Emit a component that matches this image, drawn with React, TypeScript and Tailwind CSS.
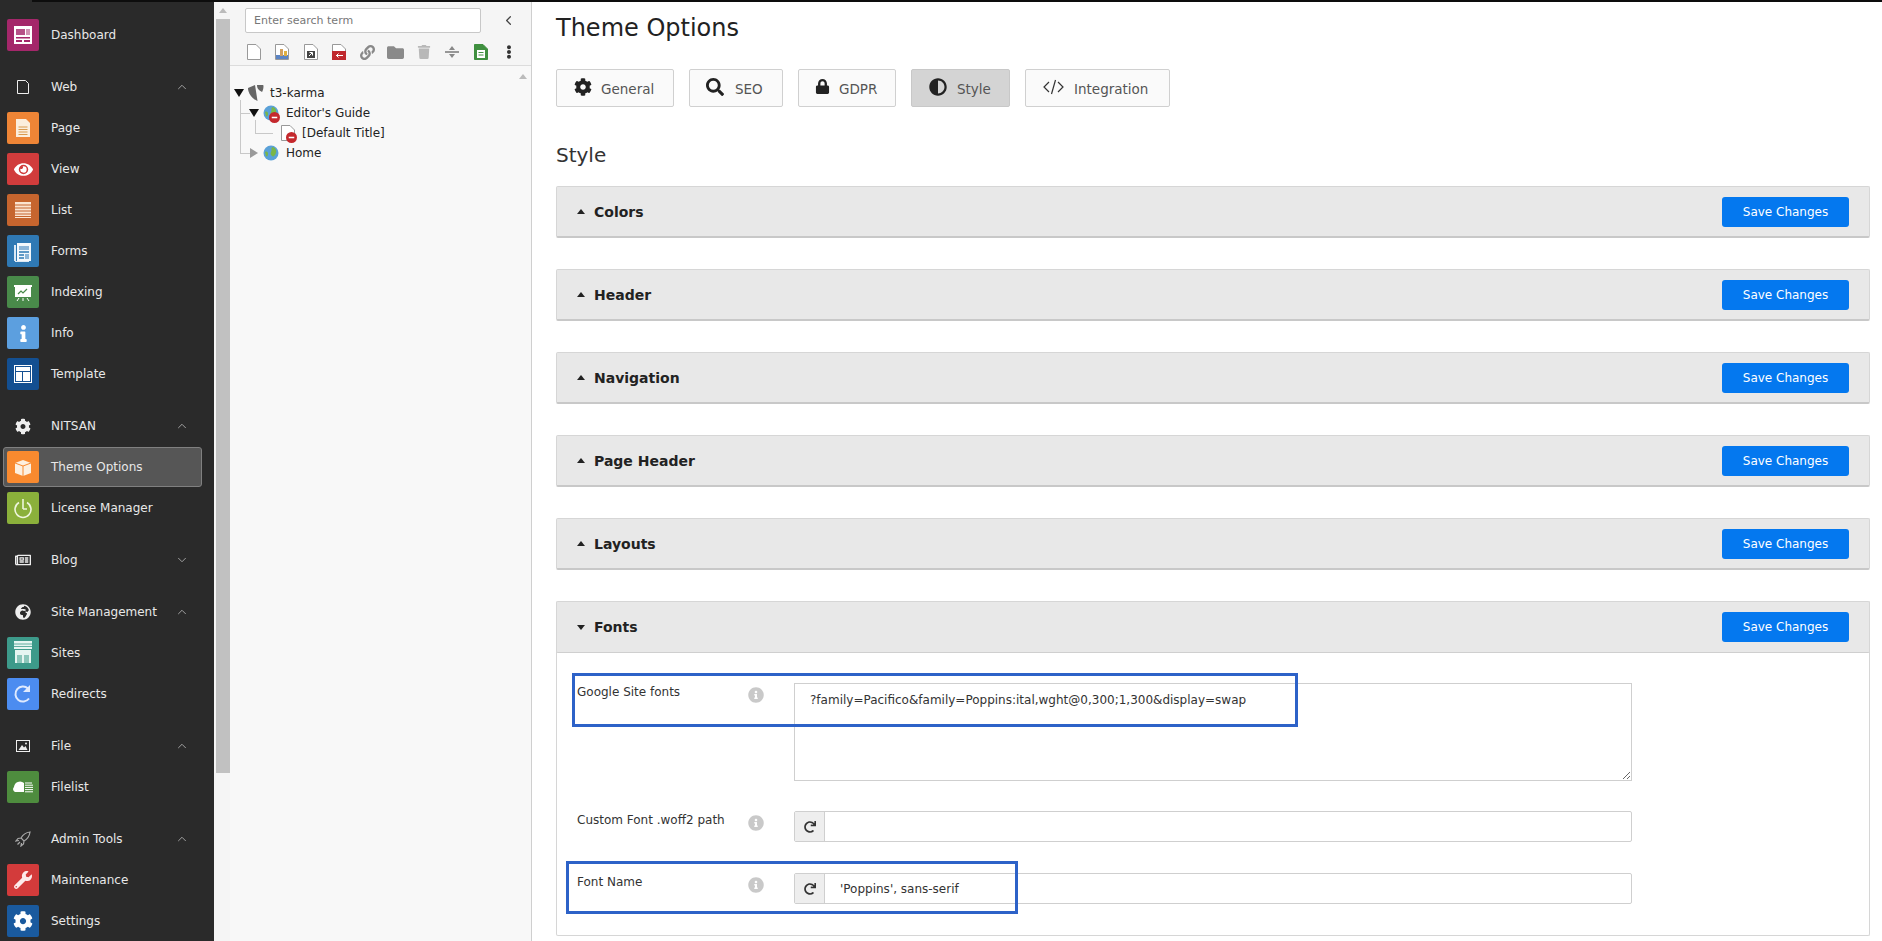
import React from "react";
import { FaCog, FaSearch, FaLock, FaAdjust, FaRedo, FaInfoCircle, FaFolder, FaTrash, FaLink, FaEllipsisV, FaWrench, FaEye, FaInfo, FaGlobeAfrica, FaRegNewspaper } from "react-icons/fa";
import { ChevronUp, ChevronDown, ChevronLeft } from "lucide-react";

const W = "#ffffff";
const ModDash = () => (
  <svg viewBox="0 0 32 32" className="w-8 h-8"><rect x="7" y="7" width="18" height="18" fill={W} /><rect x="9" y="10" width="9" height="6" fill="#a4276a" opacity=".8" /><rect x="19" y="10" width="4" height="6" fill="#a4276a" opacity=".5" /><rect x="9" y="18" width="14" height="1.5" fill="#a4276a" /><rect x="9" y="21" width="6" height="2" fill="#a4276a" /><rect x="17" y="21" width="6" height="2" fill="#a4276a" /></svg>
);
const ModPage = () => (
  <svg viewBox="0 0 32 32" className="w-8 h-8"><path d="M9 7h10l4 4v14H9z" fill="#fbeedd" /><path d="M11.500 15h9M11.500 17.500h9M11.500 20h9M11.500 22.500h9" stroke="#d99a4e" strokeWidth="1.200" /></svg>
);
const ModView = () => (
  <div className="w-8 h-8 flex items-center justify-center"><FaEye size={19} color="#fff" /></div>
);
const ModList = () => (
  <svg viewBox="0 0 32 32" className="w-8 h-8"><path d="M8 8h16v16H8z" fill="#fbe4d0" /><path d="M8 11h16M8 14h16M8 17h16M8 20h16M8 22.500h16" stroke="#c6652e" strokeWidth="1.100" /></svg>
);
const ModForms = () => (
  <svg viewBox="0 0 32 32" className="w-8 h-8"><path d="M7 10h2v16h-2zM8 26h14v1H8z" fill="#dbe9f5" /><rect x="10" y="8" width="14" height="18" fill="#f3f8fc" /><path d="M12 11h10v4H12z" fill="#8db6d8" /><path d="M12 17h10M12 20h5M12 23h5" stroke="#2f79b4" strokeWidth="1.300" /><rect x="18" y="19" width="4" height="5" fill="#8db6d8" /></svg>
);
const ModIndex = () => (
  <svg viewBox="0 0 32 32" className="w-8 h-8"><rect x="7" y="9" width="18" height="2" fill={W} /><rect x="8" y="11" width="16" height="10" fill={W} /><path d="M11 18l3-3 2 2 4-4" stroke="#498a4a" strokeWidth="1.200" fill="none" /><path d="M12 22l-2 3M20 22l2 3M16 22v3" stroke={W} strokeWidth="1" /></svg>
);
const ModInfo = () => (
  <div className="w-8 h-8 flex items-center justify-center"><FaInfo size={17} color="#fff" /></div>
);
const ModTemplate = () => (
  <svg viewBox="0 0 32 32" className="w-8 h-8"><rect x="7.500" y="7.500" width="17" height="17" fill="none" stroke={W} /><rect x="9" y="9" width="14" height="4" fill={W} /><rect x="9" y="14" width="6" height="9" fill={W} /><rect x="16" y="14" width="7" height="9" fill={W} /></svg>
);
const ModTheme = () => (
  <svg viewBox="0 0 32 32" className="w-8 h-8"><path d="M8 12l8-3 8 3v10l-8 3-8-3z" fill="#fdf0e0" /><path d="M8 12l8 3 8-3M16 15v10" stroke="#f98a2f" strokeWidth="1" fill="none" /></svg>
);
const ModLicense = () => (
  <svg viewBox="0 0 32 32" className="w-8 h-8"><path d="M12 10.500a8 8 0 1 0 8 0" fill="none" stroke="#eef5dc" strokeWidth="1.600" /><path d="M16 7v10M16 17h4" stroke="#eef5dc" strokeWidth="1.600" fill="none" /></svg>
);
const ModSites = () => (
  <svg viewBox="0 0 32 32" className="w-8 h-8"><rect x="7" y="4" width="18" height="8" fill="#e6f5f1" /><path d="M7 7h18M7 9.500h18" stroke="#3d9a8a" strokeWidth=".8" /><rect x="8" y="13" width="16" height="13" fill="#e6f5f1" /><rect x="10" y="18" width="5" height="8" fill="#8cc6ba" /><rect x="17" y="18" width="5" height="8" fill="#8cc6ba" /></svg>
);
const ModRedirect = () => (
  <svg viewBox="0 0 32 32" className="w-8 h-8"><path d="M22 20.500A7.500 7.500 0 1 1 21 10.500" fill="none" stroke="#dfeafe" strokeWidth="2" /><path d="M23 7v7h-7z" fill="#dfeafe" /></svg>
);
const ModFilelist = () => (
  <svg viewBox="0 0 32 32" className="w-8 h-8"><path d="M8 21a3 3 0 0 1-1-5 6 6 0 0 1 10-4v9z" fill={W} /><path d="M18 12h7M18 14.200h8M18 16.400h8M18 18.600h8M18 20.800h8" stroke={W} strokeWidth="1" /></svg>
);
const ModMaint = () => (
  <div className="w-8 h-8 flex items-center justify-center"><FaWrench size={18} color="#fdeaea" /></div>
);
const ModSettings = () => (
  <div className="w-8 h-8 flex items-center justify-center"><FaCog size={20} color="#fff" /></div>
);

const HWeb = () => (
  <svg viewBox="0 0 16 16" className="w-4 h-4"><path d="M2.500 1.500h8l3 3v10h-11z" fill="none" stroke="#eee" strokeWidth="1" /></svg>
);
const HFile = () => (
  <svg viewBox="0 0 16 16" className="w-4 h-4"><rect x="1.500" y="2.500" width="13" height="11" fill="none" stroke="#eee" /><path d="M3.500 12l3.500-5 2 2.500 1.500-1.500 2 4z" fill="#eee" /><circle cx="11" cy="5.500" r="1" fill="#eee" /></svg>
);
const HRocket = () => (
  <svg viewBox="0 0 16 16" className="w-4 h-4"><path d="M15 1c-4 .5-7 2.500-9 6l3 3c3.500-2 5.500-5 6-9zM6 7L3 7.500 1 10l3-.5M9 10l-.5 3L6 15l.5-3M5 11l-2.500 2.500" fill="none" stroke="#a8a8a8" strokeWidth="1.200" /></svg>
);

function Item({ label, color, icon, active }: { label: string; color: string; icon: React.ReactNode; active?: boolean }) {
  return (
    <div className="h-[41px] pl-[3px] pr-[12px]">
      <div className={`h-[40px] flex items-center pl-[3px] rounded-[3px] border ${active ? "bg-[#565656] border-[#808080]" : "border-transparent"}`}>
        <div className="w-8 h-8 rounded-[2px] shrink-0 flex items-center justify-center" style={{ backgroundColor: color }}>{icon}</div>
        <span className="ml-[12px] text-[12px] text-[#e8e8e8]">{label}</span>
      </div>
    </div>
  );
}

function Head({ label, icon, open }: { label: string; icon: React.ReactNode; open?: boolean }) {
  return (
    <div className="h-[41px] mt-[11px] pb-px flex items-center pl-[15px] pr-[25px]">
      <div className="w-4 h-4 flex items-center justify-center shrink-0">{icon}</div>
      <span className="ml-[20px] text-[12px] text-[#e8e8e8] flex-1">{label}</span>
      {open ? <ChevronUp size={14} strokeWidth={1.6} color="#a8a8a8" /> : <ChevronDown size={14} strokeWidth={1.6} color="#a8a8a8" />}
    </div>
  );
}

function Sidebar() {
  return (
    <aside className="w-[214px] shrink-0 bg-[#2a2a2a] pt-[13px] overflow-hidden">
      <Item label="Dashboard" color="#a4276a" icon={<ModDash />} />
      <Head label="Web" open icon={<HWeb />} />
      <Item label="Page" color="#ee8536" icon={<ModPage />} />
      <Item label="View" color="#d13c3c" icon={<ModView />} />
      <Item label="List" color="#c6652e" icon={<ModList />} />
      <Item label="Forms" color="#2f79b4" icon={<ModForms />} />
      <Item label="Indexing" color="#498a4a" icon={<ModIndex />} />
      <Item label="Info" color="#5c9fdf" icon={<ModInfo />} />
      <Item label="Template" color="#134f91" icon={<ModTemplate />} />
      <Head label="NITSAN" open icon={<FaCog size={17} color="#eee" />} />
      <Item label="Theme Options" color="#f98a2f" active icon={<ModTheme />} />
      <Item label="License Manager" color="#8bb03b" icon={<ModLicense />} />
      <Head label="Blog" icon={<FaRegNewspaper size={16} color="#eee" />} />
      <Head label="Site Management" open icon={<FaGlobeAfrica size={16} color="#eee" />} />
      <Item label="Sites" color="#3d9a8a" icon={<ModSites />} />
      <Item label="Redirects" color="#4c8cf0" icon={<ModRedirect />} />
      <Head label="File" open icon={<HFile />} />
      <Item label="Filelist" color="#4e8c3e" icon={<ModFilelist />} />
      <Head label="Admin Tools" open icon={<HRocket />} />
      <Item label="Maintenance" color="#d33b3b" icon={<ModMaint />} />
      <Item label="Settings" color="#1a5a9e" icon={<ModSettings />} />
    </aside>
  );
}

const Doc = ({ children, stroke = "#999" }: { children?: React.ReactNode; stroke?: string }) => (
  <svg viewBox="0 0 16 16" className="w-4 h-4"><path d="M1.500 .5H10l4.500 4.500V15.500H1.500z" fill="#fff" stroke={stroke} />{children}</svg>
);
const Sep = () => (
  <svg viewBox="0 0 16 16" className="w-4 h-4"><path d="M1 8h14" stroke="#777" strokeWidth="1.500" /><path d="M8 2l3 4H5zM8 14l-3-4h6z" fill="#888" /></svg>
);

function TreeToolbar() {
  const cells: React.ReactNode[] = [
    <Doc />,
    <Doc><rect x="2" y="11" width="12" height="4" fill="#5b84c4" /><rect x="6" y="5" width="3" height="7" fill="#d0a060" /><rect x="10" y="7" width="3" height="5" fill="#e0b040" /></Doc>,
    <Doc><path d="M4 7h8v7H4z" fill="#444" /><path d="M6 12l3-3M6.500 8.500H9.500V11.500" stroke="#fff" fill="none" /></Doc>,
    <Doc><rect x="1" y="7" width="14" height="9" fill="#c0282d" /><path d="M5 11.500h7M7.500 9.500l-2 2 2 2" stroke="#fff" fill="none" /></Doc>,
    <FaLink size={15} color="#888" />,
    <FaFolder size={17} color="#8a8a8a" />,
    <FaTrash size={14} color="#b8b8b8" />,
    <Sep />,
    <Doc stroke="#3f8f3f"><path d="M1.500 .5H10l4.500 4.500V15.500H1.500z" fill="#3f8f3f" /><rect x="4" y="6" width="8" height="8" fill="#fff" /><path d="M5.500 8.500h5M5.500 11h5" stroke="#3f8f3f" /></Doc>,
    <FaEllipsisV size={14} color="#333" />,
  ];
  return (
    <div className="h-[32px] mt-[3px] flex items-center pl-[10px]">
      {cells.map((c, i) => (
        <div key={i} className="w-[28.300px] h-4 flex items-center justify-center shrink-0">{c}</div>
      ))}
    </div>
  );
}

const Globe = () => (
  <svg viewBox="0 0 16 16" className="w-4 h-4"><circle cx="8" cy="8" r="7.500" fill="#5aa1d8" /><path d="M9 2c3 0 5 3 4 6s-3 4-4 3-2-2-1-4 0-3 1-5z" fill="#7ab648" /><path d="M2 7c2-1 3 0 3 2s-1 3-2 2z" fill="#7ab648" /></svg>
);
const Badge = () => (
  <svg viewBox="0 0 10 10" className="absolute -right-[1px] -bottom-[2px] w-[11px] h-[11px]"><circle cx="5" cy="5" r="5" fill="#c4282d" /><path d="M2.500 5h5" stroke="#fff" strokeWidth="1.400" /></svg>
);
const Tri = ({ gray }: { gray?: boolean }) =>
  gray ? (
    <svg viewBox="0 0 10 10" className="w-[10px] h-[10px]"><path d="M1 0l8 5-8 5z" fill="#9a9a9a" /></svg>
  ) : (
    <svg viewBox="0 0 10 10" className="w-[10px] h-[10px]"><path d="M0 1h10l-5 8z" fill="#111" /></svg>
  );

function TreeRow({ indent, tri, icon, label, tight }: { indent: string; tri?: React.ReactNode; icon: React.ReactNode; label: string; tight?: boolean }) {
  return (
    <div className={`h-[20px] flex items-center ${indent}`}>
      <div className="w-[10px] h-[10px] flex shrink-0 mr-[4px]">{tri}</div>
      <div className="relative w-4 h-4 shrink-0">{icon}</div>
      <span className={`${tight ? "ml-[6px]" : "ml-[7px]"} text-[12px] text-[#222] whitespace-nowrap`}>{label}</span>
    </div>
  );
}

function TreePanel() {
  return (
    <div className="w-[318px] shrink-0 flex bg-[#f5f5f5] border-r border-[#cfcfcf] h-full">
      <div className="w-[16px] shrink-0 pl-[2px] flex flex-col items-stretch">
        <div className="h-[17px] flex items-center justify-center">
          <svg viewBox="0 0 8 5" className="w-2 h-[5px]"><path d="M4 0l4 5H0z" fill="#bbb" /></svg>
        </div>
        <div className="h-[754px] bg-[#c1c1c1]" />
      </div>
      <div className="flex-1 flex flex-col min-w-0">
        <div className="h-[64px] border-b border-[#dcdcdc] shrink-0">
          <div className="flex items-center pl-[15px] pt-[6px]">
            <div className="w-[236px] h-[25px] bg-white border border-[#c8c8c8] rounded-[2px] pl-[8px] pt-px flex items-center text-[11px] text-[#777]">Enter search term</div>
            <div className="ml-[20px]"><ChevronLeft size={15} color="#444" /></div>
          </div>
          <TreeToolbar />
        </div>
        <div className="relative flex-1 bg-[#f8f8f8] pt-[17px]">
          <div className="absolute right-[4px] top-[8px]">
            <svg viewBox="0 0 8 5" className="w-2 h-[5px]"><path d="M4 0l4 5H0z" fill="#bbb" /></svg>
          </div>
          <div className="absolute left-[10px] top-[34px] w-px h-[53px] bg-[#c8c8c8]" />
          <div className="absolute left-[10px] top-[47px] w-[10px] h-px bg-[#c8c8c8]" />
          <div className="absolute left-[10px] top-[87px] w-[10px] h-px bg-[#c8c8c8]" />
          <div className="absolute left-[25px] top-[54px] w-px h-[13px] bg-[#c8c8c8]" />
          <div className="absolute left-[25px] top-[67px] w-[18px] h-px bg-[#c8c8c8]" />
          <TreeRow indent="pl-[4px]" tight tri={<Tri />} label="t3-karma" icon={
            <svg viewBox="0 0 16 16" className="w-4 h-4"><path d="M0 3l7-3 2.500 16C4 14 0 8 0 3z" fill="#666" /><path d="M9 0h6c1 0 .5 5-1 7C11 5 9 4 9 0z" fill="#666" /></svg>
          } />
          <TreeRow indent="pl-[19px]" tri={<Tri />} label="Editor's Guide" icon={<><Globe /><Badge /></>} />
          <TreeRow indent="pl-[36px]" tight label="[Default Title]" icon={<><Doc /><Badge /></>} />
          <TreeRow indent="pl-[19px]" tri={<Tri gray />} label="Home" icon={<Globe />} />
        </div>
      </div>
    </div>
  );
}

function Tab({ label, icon, active, box }: { label: string; icon: React.ReactNode; active?: boolean; box: string }) {
  return (
    <div className={`h-[38px] flex items-center rounded-[2px] border ${box} ${active ? "bg-[#d4d4d4] border-[#c8c8c8]" : "bg-[#fafafa] border-[#d0d0d0]"}`}>
      <div className="-mt-[3px] flex">{icon}</div>
      <span className="pt-[2px] text-[13.500px] text-[#555]">{label}</span>
    </div>
  );
}

function Panel({ label }: { label: string }) {
  return (
    <div className="mb-[31px]">
      <PanelHead label={label} />
    </div>
  );
}

function PanelHead({ label, open }: { label: string; open?: boolean }) {
  return (
    <div className={`h-[52px] flex items-center px-[20px] bg-[#e8e8e8] border border-[#d6d6d6] ${open ? "-mx-px border-b-[#cfcfcf]" : "border-b-2 border-b-[#c8c8c8]"} rounded-[2px]`}>
      <svg viewBox="0 0 8 5" className={`w-2 h-[5px] ${open ? "rotate-180" : ""}`}><path d="M4 0l4 5H0z" fill="#222" /></svg>
      <span className="ml-[9px] pt-px text-[14px] font-bold text-[#222] flex-1">{label}</span>
      <div className="w-[127px] h-[30px] rounded-[3px] bg-[#0478ef] flex items-center justify-center text-[12px] text-white">Save Changes</div>
    </div>
  );
}

const Field = ({ label, children }: { label: string; children: React.ReactNode }) => (
  <div className="flex">
    <div className="w-[171px] shrink-0 text-[12px] leading-[18px] text-[#333]">{label}</div>
    <div className="w-4 shrink-0 mt-[4px]"><FaInfoCircle size={16} color="#c9c9c9" /></div>
    <div className="ml-[30px] w-[838px]">{children}</div>
  </div>
);

const Group = ({ value }: { value?: string }) => (
  <div className="h-[31px] flex border border-[#cfcfcf] rounded-[2px] bg-white">
    <div className="w-[30px] bg-[#eeeeee] border-r border-[#cfcfcf] flex items-center justify-center"><FaRedo size={12} color="#333" /></div>
    <input readOnly value={value ?? ""} className="flex-1 pl-[15px] text-[12px] text-[#333] outline-none bg-transparent" />
  </div>
);

function Main() {
  return (
    <main className="flex-1 min-w-0 bg-white pl-[24px] pr-[12px] pt-[11px] overflow-hidden">
      <h1 className="text-[24px] leading-[30px] text-[#222]">Theme Options</h1>
      <div className="mt-[26px] flex gap-[15px]">
        <Tab box="w-[118px] pl-[17px] gap-[9px]" label="General" icon={<FaCog size={18} color="#222" />} />
        <Tab box="w-[94px] pl-[16px] gap-[11px]" label="SEO" icon={<FaSearch size={18} color="#222" />} />
        <Tab box="w-[98px] pl-[16px] gap-[9px]" label="GDPR" icon={<FaLock size={15} color="#222" />} />
        <Tab box="w-[99px] pl-[17px] gap-[10px]" label="Style" active icon={<FaAdjust size={18} color="#222" />} />
        <Tab box="w-[145px] pl-[17px] gap-[10px]" label="Integration" icon={
          <svg viewBox="0 0 21 16" className="w-[21px] h-4"><path d="M6 3L1 8l5 5M15 3l5 5-5 5M12.500 1L8.500 15" fill="none" stroke="#333" strokeWidth="1.200" /></svg>
        } />
      </div>
      <h2 className="mt-[34px] text-[20px] leading-[28px] text-[#333]">Style</h2>
      <div className="mt-[17px]">
        <Panel label="Colors" />
        <Panel label="Header" />
        <Panel label="Navigation" />
        <Panel label="Page Header" />
        <Panel label="Layouts" />
        <div className="border-x border-b border-[#d6d6d6] rounded-[2px]">
          <PanelHead label="Fonts" open />
          <div className="relative pl-[20px] pt-[30px] pb-[31px]">
            <Field label="Google Site fonts">
              <textarea
                readOnly
                defaultValue="?family=Pacifico&family=Poppins:ital,wght@0,300;1,300&display=swap"
                className="block w-full h-[98px] border border-[#cfcfcf] pl-[15px] pt-[7px] text-[12px] leading-[18px] text-[#333] outline-none resize-y"
              />
            </Field>
            <div className="mt-[30px]"><Field label="Custom Font .woff2 path"><Group /></Field></div>
            <div className="mt-[31px]"><Field label="Font Name"><Group value="'Poppins', sans-serif" /></Field></div>
            <div className="absolute left-[15px] top-[20px] w-[726px] h-[54px] border-[3px] border-[#2d62c8]" />
            <div className="absolute left-[9px] top-[208px] w-[452px] h-[53px] border-[3px] border-[#2d62c8]" />
          </div>
        </div>
      </div>
    </main>
  );
}

export default function App() {
  return (
    <div className="w-[1882px] h-[941px] overflow-hidden flex flex-col bg-white [font-family:'DejaVu_Sans',Verdana,sans-serif]">
      <div className="h-[2px] shrink-0 flex bg-[#0d0d0d]"><div className="w-8 bg-[#2a2a2a]" /></div>
      <div className="flex-1 min-h-0 flex">
        <Sidebar />
        <TreePanel />
        <Main />
      </div>
    </div>
  );
}
